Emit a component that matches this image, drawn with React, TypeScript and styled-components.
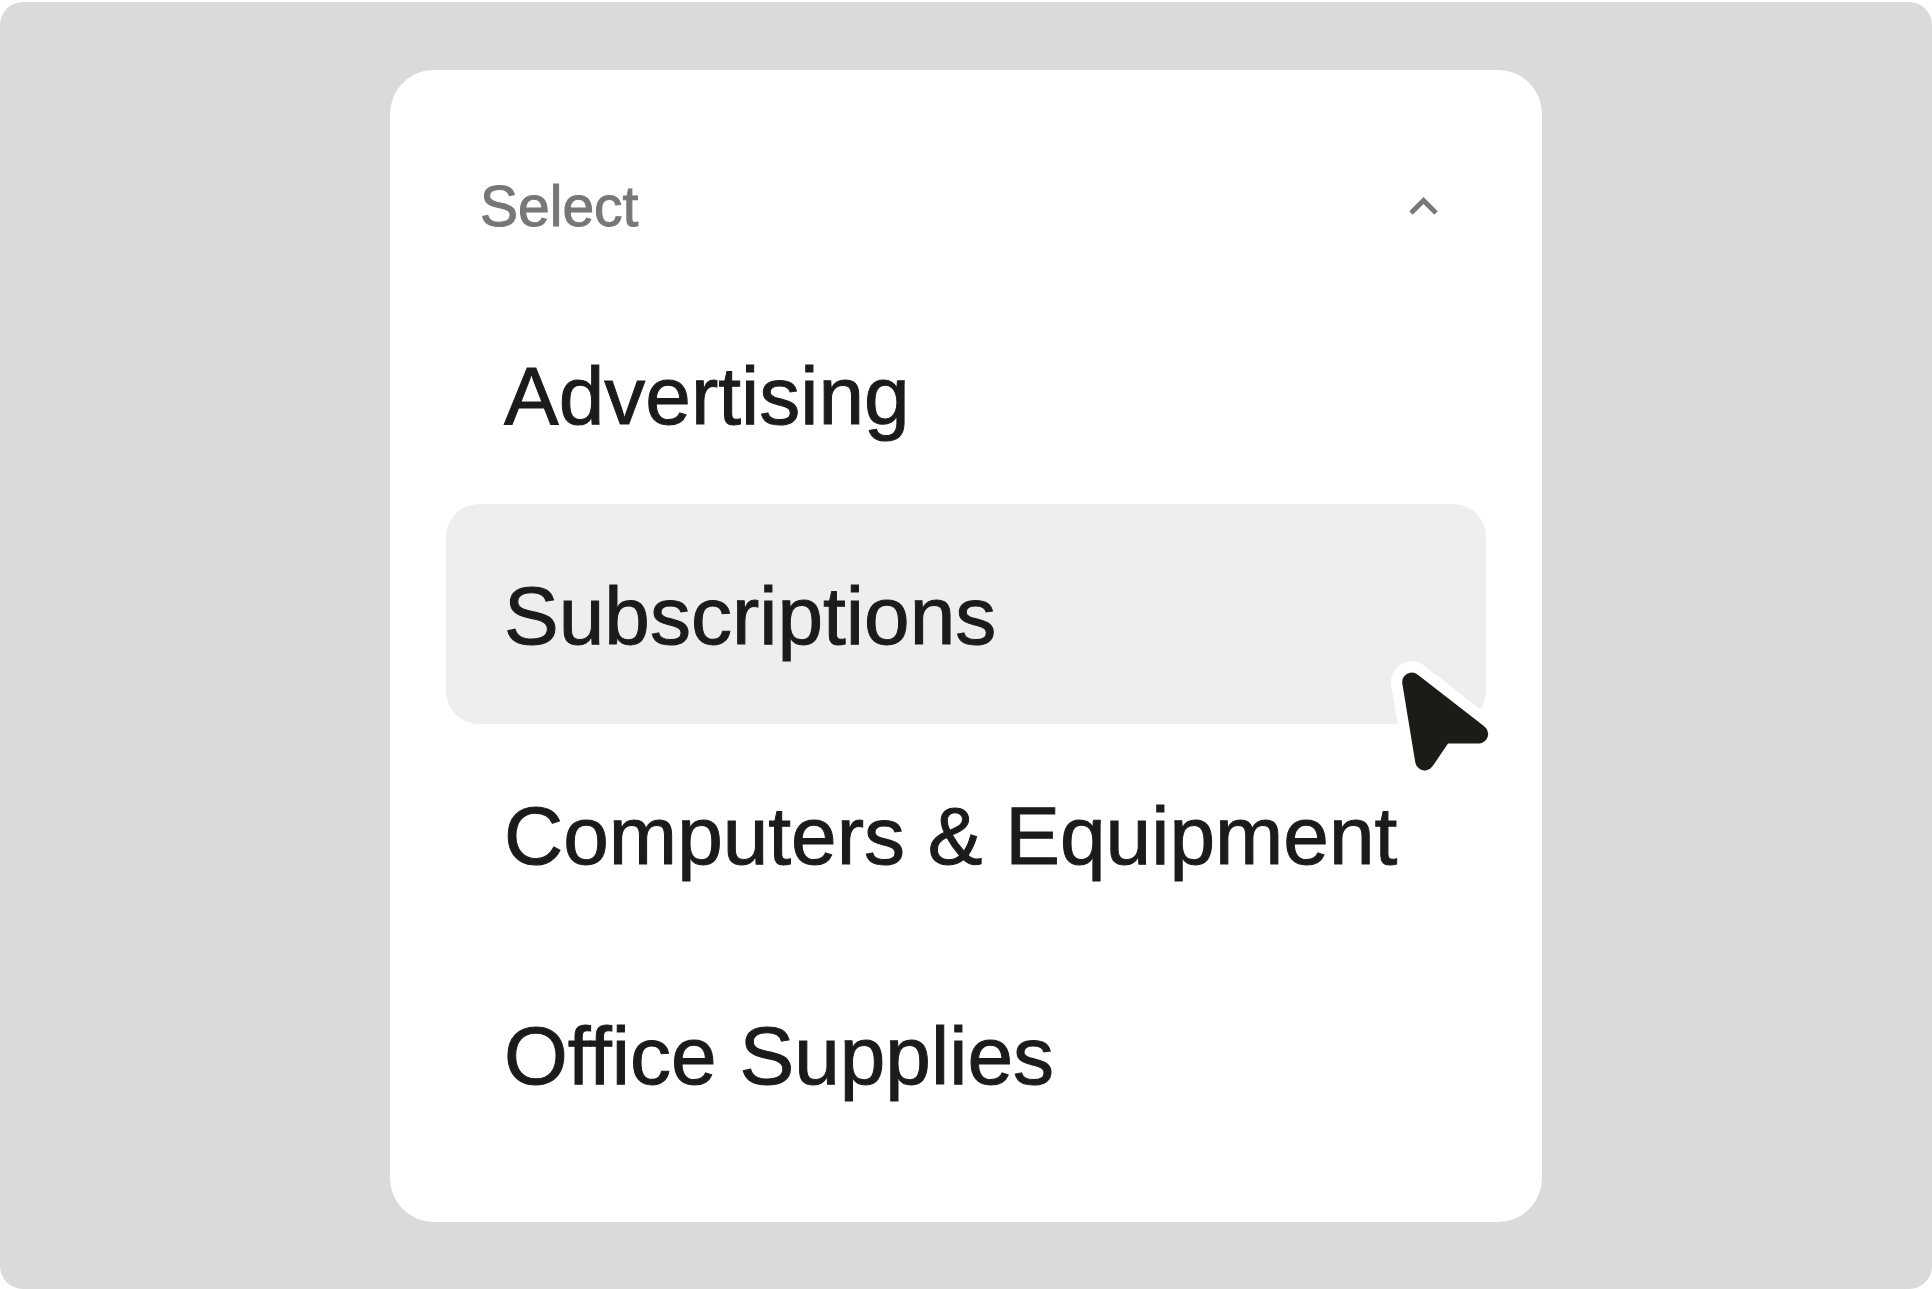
import React, { useState } from "react";
import styled, { createGlobalStyle } from "styled-components";

const GlobalStyle = createGlobalStyle`
  *, *::before, *::after { box-sizing: border-box; }
  body {
    margin: 0;
    background: #ffffff;
    font-family: "Liberation Sans", Arial, Helvetica, sans-serif;
  }
`;

const Page = styled.div`
  display: flex;
  min-height: 100vh;
  padding-top: 2px;
`;

const Stage = styled.main`
  flex: 1;
  display: flex;
  justify-content: center;
  align-items: flex-start;
  padding: 68px 24px 66px;
  border-radius: 23px;
  background: #dadada;
`;

const Card = styled.div`
  width: 100%;
  max-width: 1152px;
  padding: 56px 56px 58px;
  border-radius: 44px;
  background: #ffffff;
`;

const Trigger = styled.button`
  display: flex;
  align-items: center;
  justify-content: space-between;
  width: 100%;
  height: 158px;
  padding: 2px 46px 0 34px;
  border: 0;
  background: none;
  color: #777775;
  font-family: inherit;
  font-size: 57px;
  line-height: 64px;
  text-align: left;
  -webkit-text-stroke: 1px currentColor;
  cursor: pointer;
`;

const Chevron = styled.svg`
  flex: none;
  width: 32px;
  height: 32px;
`;

const Options = styled.ul`
  margin: 0;
  padding: 0;
  list-style: none;
`;

const OptionItem = styled.li`
  position: relative;
`;

const OptionButton = styled.button<{ $active: boolean }>`
  display: block;
  width: 100%;
  padding: 64px 24px 60px 58px;
  border: 0;
  border-radius: 33px;
  background: ${({ $active }) => ($active ? "#eeeeee" : "transparent")};
  color: #1b1b19;
  font-family: inherit;
  font-size: 82px;
  line-height: 96px;
  text-align: left;
  -webkit-text-stroke: 1px currentColor;
  cursor: pointer;
`;

const Pointer = styled.svg`
  position: absolute;
  z-index: 1;
  top: 136px;
  right: -34px;
  width: 150px;
  height: 150px;
  pointer-events: none;
`;

const categories = [
  "Advertising",
  "Subscriptions",
  "Computers & Equipment",
  "Office Supplies",
];

const arrow = "M125 126 L326 282 H219 L164 363 Z";

export default function App() {
  const [active, setActive] = useState("Subscriptions");

  return (
    <Page>
      <GlobalStyle />
      <Stage>
        <Card>
          <Trigger type="button" aria-expanded="true" aria-controls="categories">
            Select
            <Chevron viewBox="0 0 32 32" fill="none" aria-hidden="true">
              <path d="M3 23 L15.5 10.500 L28 23" stroke="currentColor" strokeWidth="4.800" />
            </Chevron>
          </Trigger>
          <Options id="categories">
            {categories.map((name) => (
              <OptionItem key={name}>
                <OptionButton
                  type="button"
                  $active={name === active}
                  aria-pressed={name === active}
                  onClick={() => setActive(name)}
                >
                  {name}
                </OptionButton>
                {name === active && (
                  <Pointer viewBox="0 0 450 450" strokeLinejoin="round" aria-hidden="true">
                    <path d={arrow} fill="#ffffff" stroke="#ffffff" strokeWidth="124" />
                    <path d={arrow} fill="#1b1b17" stroke="#1b1b17" strokeWidth="57" />
                  </Pointer>
                )}
              </OptionItem>
            ))}
          </Options>
        </Card>
      </Stage>
    </Page>
  );
}
